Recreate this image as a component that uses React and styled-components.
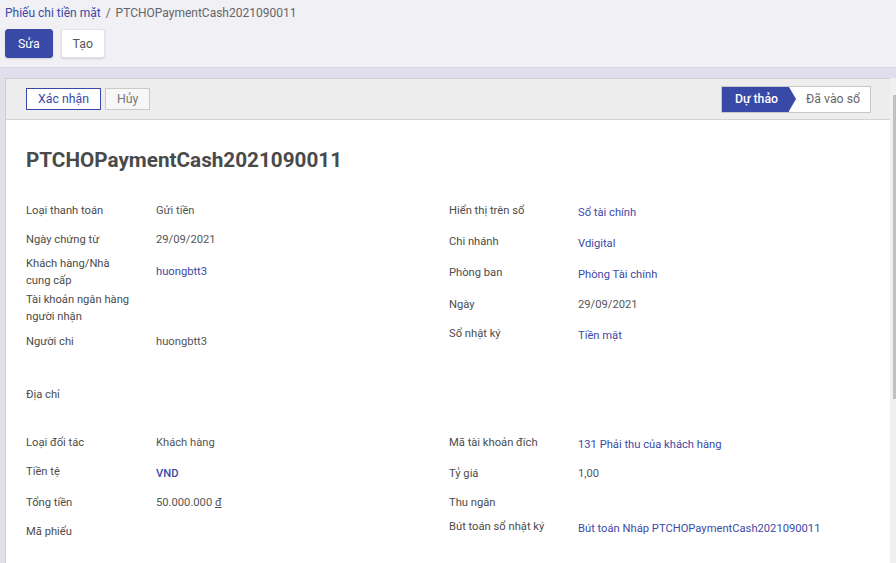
import React from 'react';
import styled, { createGlobalStyle } from 'styled-components';

const GlobalStyle = createGlobalStyle`
  html, body {
    margin: 0;
    padding: 0;
    height: 100%;
    overflow: hidden;
  }
  body {
    font-family: Roboto, "Noto Sans", sans-serif;
    color: #4c4c4c;
  }
`;

const PRIMARY = '#3949a8';
const LINK = '#3d4aa6';

const Page = styled.div`
  height: 100vh;
  display: flex;
  flex-direction: column;
  background: #dfe0ec;
`;

const ControlPanel = styled.div`
  height: 67px;
  flex: none;
  background: #f0f0f5;
  border-bottom: 1px solid #d5d6e2;
  padding: 0 5px;
`;

const Breadcrumb = styled.div`
  height: 26px;
  display: flex;
  align-items: center;
  gap: 5px;
  font-size: 12px;
  color: #666;
  white-space: nowrap;
`;

const Crumb = styled.span`
  color: ${LINK};
`;

const Buttons = styled.div`
  display: flex;
  gap: 8px;
  margin-top: 3px;
`;

const Button = styled.button`
  height: 29px;
  padding: 0 ${(p) => (p.$primary ? '12px' : '11px')};
  border-radius: 3px;
  font-family: inherit;
  font-size: 12.3px;
  border: 1px solid ${(p) => (p.$primary ? PRIMARY : '#e2e2e8')};
  background: ${(p) => (p.$primary ? PRIMARY : '#fff')};
  color: ${(p) => (p.$primary ? '#fff' : '#555')};
  box-shadow: 0 1px 2px rgba(0, 0, 0, 0.12);
`;

const Band = styled.div`
  height: 10px;
  flex: none;
`;

const Content = styled.div`
  flex: 1;
  min-height: 0;
  display: flex;
`;

const Viewport = styled.div`
  flex: 1;
  overflow: hidden;
  padding-left: 5px;
`;

const ScrollTrack = styled.div`
  width: 6px;
  flex: none;
  background: #f0f0f0;
  display: flex;
  flex-direction: column;
  align-items: flex-end;
`;

const ScrollThumb = styled.div`
  width: 3px;
  height: 304px;
  margin-top: 17px;
  background: #c1c1c1;
`;

const Sheet = styled.div`
  min-height: 720px;
  background: #fff;
  border-top: 1px solid #cfcfcf;
  border-left: 1px solid #cfcfcf;
`;

const StatusBar = styled.div`
  height: 40px;
  background: #ededed;
  border-bottom: 1px solid #d2d2d2;
  display: flex;
  align-items: center;
  justify-content: space-between;
  padding: 0 19px 0 20px;
`;

const ActionGroup = styled.div`
  display: flex;
  gap: 4px;
`;

const ActionButton = styled.button`
  height: 22px;
  padding: 0 11px;
  font-family: inherit;
  font-size: 12.3px;
  border: 1px solid ${(p) => (p.$main ? PRIMARY : '#c9c9c9')};
  background: ${(p) => (p.$main ? '#fff' : '#f7f7f7')};
  color: ${(p) => (p.$main ? PRIMARY : '#777')};
  border-radius: 0;
`;

const Steps = styled.div`
  display: flex;
  height: 25px;
  border: 1px solid #c8c8c8;
`;

const Step = styled.div`
  position: relative;
  display: flex;
  align-items: center;
  font-size: 12.3px;
  padding: ${(p) => (p.$active ? '0 11px 0 13px' : '0 10px 0 17px')};
  background: ${(p) => (p.$active ? PRIMARY : '#fff')};
  color: ${(p) => (p.$active ? '#fff' : '#666')};
  font-weight: ${(p) => (p.$active ? 500 : 400)};

  ${(p) =>
    p.$active &&
    `
    &::after {
      content: '';
      position: absolute;
      right: -7px;
      top: 0;
      border-top: 12.5px solid transparent;
      border-bottom: 12.5px solid transparent;
      border-left: 7px solid ${PRIMARY};
      z-index: 1;
    }
  `}
`;

const SheetBody = styled.div`
  padding: 28px 20px 0 20px;
`;

const Title = styled.h1`
  margin: 0;
  font-size: 20.7px;
  line-height: 25px;
  font-weight: 700;
  color: #4a4a4a;
`;

const FieldGroup = styled.div`
  display: grid;
  grid-template-columns: 423px 1fr;
  margin-top: ${(p) => p.$top}px;
`;

const Column = styled.div`
  display: flex;
  flex-direction: column;
`;

const Row = styled.div`
  display: flex;
  align-items: center;
  height: ${(p) => p.$h}px;
  font-size: 11.2px;
  line-height: 17px;
`;

const Label = styled.div`
  width: ${(p) => p.$w || 130}px;
  flex: none;
  color: #4c4c4c;
  padding-right: 22px;
  box-sizing: border-box;
`;

const Value = styled.div`
  color: ${(p) => (p.$link ? LINK : '#555')};
  font-weight: ${(p) => (p.$strong ? 500 : 400)};
  margin-top: ${(p) => (p.$link && !p.$flat ? 4 : 0)}px;
  white-space: nowrap;
`;

const Currency = styled.span`
  text-decoration: underline;
`;

const leftTop = [
  { label: 'Loại thanh toán', value: 'Gửi tiền', h: 29 },
  { label: 'Ngày chứng từ', value: '29/09/2021', h: 28 },
  { label: 'Khách hàng/Nhà cung cấp', value: 'huongbtt3', link: true, flat: true, h: 37 },
  { label: 'Tài khoản ngân hàng người nhận', value: '', h: 36 },
  { label: 'Người chi', value: 'huongbtt3', h: 30 },
];

const rightTop = [
  { label: 'Hiển thị trên sổ', value: 'Sổ tài chính', link: true, h: 29 },
  { label: 'Chi nhánh', value: 'Vdigital', link: true, h: 32 },
  { label: 'Phòng ban', value: 'Phòng Tài chính', link: true, h: 30 },
  { label: 'Ngày', value: '29/09/2021', h: 34 },
  { label: 'Sổ nhật ký', value: 'Tiền mặt', link: true, h: 24 },
];

const leftBottom = [
  { label: 'Loại đối tác', value: 'Khách hàng', h: 28 },
  { label: 'Tiền tệ', value: 'VND', link: true, strong: true, h: 30 },
  { label: 'Tổng tiền', value: 'money', h: 32 },
  { label: 'Mã phiếu', value: '', h: 26 },
];

const rightBottom = [
  { label: 'Mã tài khoản đích', value: '131 Phải thu của khách hàng', link: true, h: 28 },
  { label: 'Tỷ giá', value: '1,00', h: 34 },
  { label: 'Thu ngân', value: '', h: 24 },
  { label: 'Bút toán sổ nhật ký', value: 'Bút toán Nháp PTCHOPaymentCash2021090011', link: true, h: 24 },
];

const renderValue = (f) =>
  f.value === 'money' ? (
    <>
      50.000.000 <Currency>đ</Currency>
    </>
  ) : (
    f.value
  );

const Fields = ({ items, labelWidth }) => (
  <Column>
    {items.map((f) => (
      <Row key={f.label} $h={f.h}>
        <Label $w={labelWidth}>{f.label}</Label>
        <Value $link={f.link} $flat={f.flat} $strong={f.strong}>
          {renderValue(f)}
        </Value>
      </Row>
    ))}
  </Column>
);

const App = () => (
  <Page>
    <GlobalStyle />
    <ControlPanel>
      <Breadcrumb>
        <Crumb>Phiếu chi tiền mặt</Crumb>
        <span>/</span>
        <span>PTCHOPaymentCash2021090011</span>
      </Breadcrumb>
      <Buttons>
        <Button $primary>Sửa</Button>
        <Button>Tạo</Button>
      </Buttons>
    </ControlPanel>
    <Band />
    <Content>
      <Viewport>
        <Sheet>
          <StatusBar>
            <ActionGroup>
              <ActionButton $main>Xác nhận</ActionButton>
              <ActionButton>Hủy</ActionButton>
            </ActionGroup>
            <Steps>
              <Step $active>Dự thảo</Step>
              <Step>Đã vào sổ</Step>
            </Steps>
          </StatusBar>
          <SheetBody>
            <Title>PTCHOPaymentCash2021090011</Title>
            <FieldGroup $top={23}>
              <Fields items={leftTop} labelWidth={130} />
              <Fields items={rightTop} labelWidth={129} />
            </FieldGroup>
            <FieldGroup $top={24}>
              <Row $h={28}>
                <Label>Địa chỉ</Label>
              </Row>
            </FieldGroup>
            <FieldGroup $top={20}>
              <Fields items={leftBottom} labelWidth={130} />
              <Fields items={rightBottom} labelWidth={129} />
            </FieldGroup>
          </SheetBody>
        </Sheet>
      </Viewport>
      <ScrollTrack>
        <ScrollThumb />
      </ScrollTrack>
    </Content>
  </Page>
);

export default App;
